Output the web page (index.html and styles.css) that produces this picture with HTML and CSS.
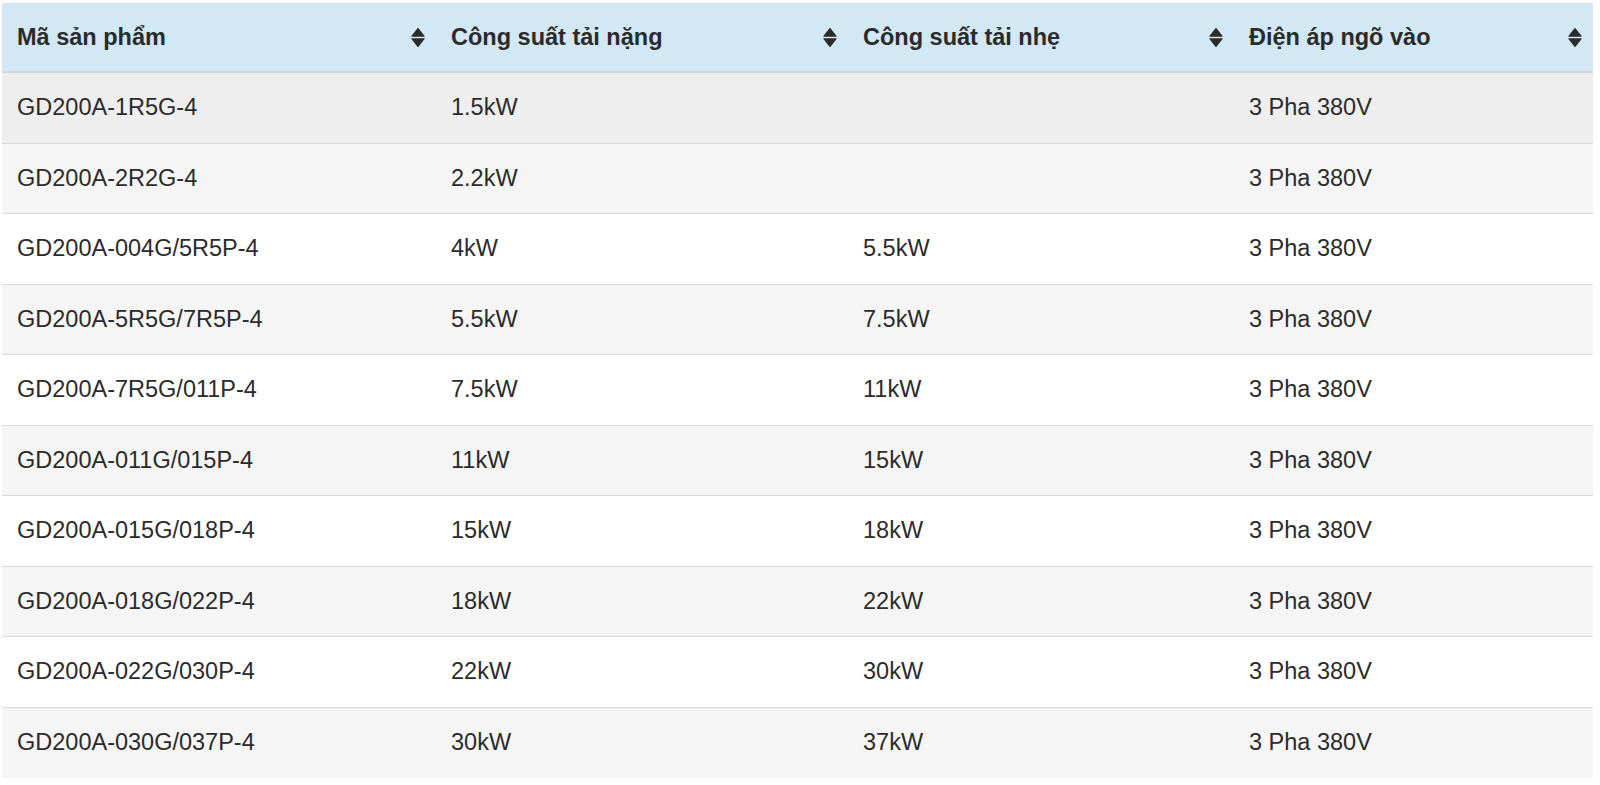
FILE: index.html
```html
<!DOCTYPE html>
<html lang="vi">
<head>
<meta charset="utf-8">
<title>Bảng sản phẩm</title>
<link rel="stylesheet" href="styles.css">
</head>
<body>
<table class="spec">
  <colgroup>
    <col class="c1"><col class="c2"><col class="c3"><col class="c4">
  </colgroup>
  <thead>
    <tr>
      <th><div class="th-in"><span>Mã sản phẩm</span><svg class="sort" viewBox="0 0 15 20"><path d="M1.2 8.6 L7 1.2 Q7.5 0.6 8 1.2 L13.8 8.6 Q14.2 9.2 13.4 9.2 L1.6 9.2 Q0.8 9.2 1.2 8.6Z M1.2 11.4 L7 18.8 Q7.5 19.4 8 18.8 L13.8 11.4 Q14.2 10.8 13.4 10.8 L1.6 10.8 Q0.8 10.8 1.2 11.4Z"/></svg></div></th>
      <th><div class="th-in"><span>Công suất tải nặng</span><svg class="sort" viewBox="0 0 15 20"><path d="M1.2 8.6 L7 1.2 Q7.5 0.6 8 1.2 L13.8 8.6 Q14.2 9.2 13.4 9.2 L1.6 9.2 Q0.8 9.2 1.2 8.6Z M1.2 11.4 L7 18.8 Q7.5 19.4 8 18.8 L13.8 11.4 Q14.2 10.8 13.4 10.8 L1.6 10.8 Q0.8 10.8 1.2 11.4Z"/></svg></div></th>
      <th><div class="th-in"><span>Công suất tải nhẹ</span><svg class="sort" viewBox="0 0 15 20"><path d="M1.2 8.6 L7 1.2 Q7.5 0.6 8 1.2 L13.8 8.6 Q14.2 9.2 13.4 9.2 L1.6 9.2 Q0.8 9.2 1.2 8.6Z M1.2 11.4 L7 18.8 Q7.5 19.4 8 18.8 L13.8 11.4 Q14.2 10.8 13.4 10.8 L1.6 10.8 Q0.8 10.8 1.2 11.4Z"/></svg></div></th>
      <th><div class="th-in"><span>Điện áp ngõ vào</span><svg class="sort" viewBox="0 0 15 20"><path d="M1.2 8.6 L7 1.2 Q7.5 0.6 8 1.2 L13.8 8.6 Q14.2 9.2 13.4 9.2 L1.6 9.2 Q0.8 9.2 1.2 8.6Z M1.2 11.4 L7 18.8 Q7.5 19.4 8 18.8 L13.8 11.4 Q14.2 10.8 13.4 10.8 L1.6 10.8 Q0.8 10.8 1.2 11.4Z"/></svg></div></th>
    </tr>
  </thead>
  <tbody>
    <tr class="hover"><td>GD200A-1R5G-4</td><td>1.5kW</td><td></td><td>3 Pha 380V</td></tr>
    <tr><td>GD200A-2R2G-4</td><td>2.2kW</td><td></td><td>3 Pha 380V</td></tr>
    <tr><td>GD200A-004G/5R5P-4</td><td>4kW</td><td>5.5kW</td><td>3 Pha 380V</td></tr>
    <tr><td>GD200A-5R5G/7R5P-4</td><td>5.5kW</td><td>7.5kW</td><td>3 Pha 380V</td></tr>
    <tr><td>GD200A-7R5G/011P-4</td><td>7.5kW</td><td>11kW</td><td>3 Pha 380V</td></tr>
    <tr><td>GD200A-011G/015P-4</td><td>11kW</td><td>15kW</td><td>3 Pha 380V</td></tr>
    <tr><td>GD200A-015G/018P-4</td><td>15kW</td><td>18kW</td><td>3 Pha 380V</td></tr>
    <tr><td>GD200A-018G/022P-4</td><td>18kW</td><td>22kW</td><td>3 Pha 380V</td></tr>
    <tr><td>GD200A-022G/030P-4</td><td>22kW</td><td>30kW</td><td>3 Pha 380V</td></tr>
    <tr><td>GD200A-030G/037P-4</td><td>30kW</td><td>37kW</td><td>3 Pha 380V</td></tr>
  </tbody>
</table>
</body>
</html>
```

FILE: styles.css
```css
html, body {
  margin: 0;
  padding: 0;
  background: #ffffff;
}

body {
  font-family: "Liberation Sans", Arial, Helvetica, sans-serif;
  color: #2b2b2b;
}

.spec {
  width: 1591px;
  margin: 3px 0 0 2px;
  border-collapse: separate;
  border-spacing: 0;
  table-layout: fixed;
  font-size: 23.5px;
}

.c1 { width: 434px; }
.c2 { width: 412px; }
.c3 { width: 386px; }
.c4 { width: 359px; }

.spec th {
  background: #d2e8f5;
  text-align: left;
  font-weight: bold;
  color: #2b2b2b;
  padding: 0 10px 0 15px;
  border-bottom: 2px solid #d6d6d6;
  box-sizing: border-box;
  height: 70px;
}

.th-in {
  display: flex;
  align-items: center;
  justify-content: space-between;
}

.sort {
  width: 16px;
  height: 21px;
  fill: #2b2b2b;
  flex: none;
}

.spec td {
  padding: 0 15px;
  height: 70.5px;
  box-sizing: border-box;
  border-bottom: 1px solid #dadada;
  vertical-align: middle;
  background: #ffffff;
}

.spec tbody tr:nth-child(even) td {
  background: #f5f5f5;
}

.spec tbody tr.hover td {
  background: #eeeeee;
}

.spec tbody tr:last-child td {
  border-bottom: none;
}
```
